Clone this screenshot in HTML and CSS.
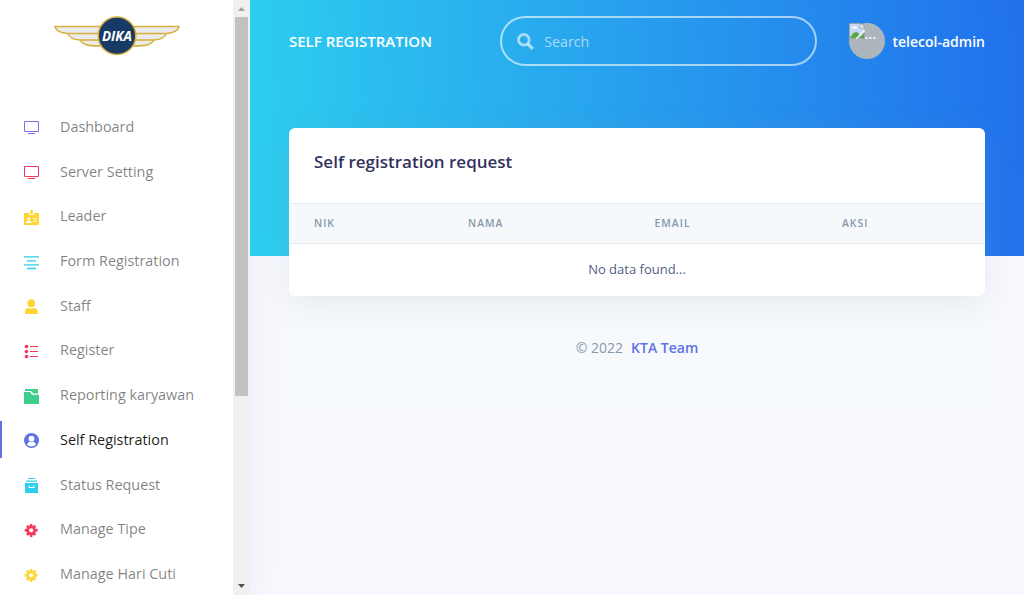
FILE: index.html
```
<!DOCTYPE html>
<html lang="en">
<head>
<meta charset="utf-8">
<title>Self Registration</title>
<link rel="stylesheet" href="styles.css">
</head>
<body>
<div class="app">
  <aside class="sidebar">
    <div class="sidebar-body">
      <div class="brand">
        <svg width="126" height="42" viewBox="0 0 126 42">
          <g fill="#ebebeb" stroke="#d6b13d" stroke-width="1.4" stroke-linejoin="round">
            <path d="M46 11.500H.8C2 15.500 6 18 13.500 18.500C15 22 19 24.500 26 25C28 29 32 31 46 31ZM13.500 18.500H45M26 25H45"/>
            <path d="M80 11.500H125.200C124 15.500 120 18 112.500 18.500C111 22 107 24.500 100 25C98 29 94 31 80 31ZM112.500 18.500H81M100 25H81"/>
          </g>
          <circle cx="63" cy="20.700" r="18.800" fill="#183a66" stroke="#d6b13d" stroke-width="1.500"/>
          <text x="63" y="26" class="brand-text" text-anchor="middle" textLength="30" lengthAdjust="spacingAndGlyphs">DIKA</text>
        </svg>
      </div>
      <nav class="nav">
        <a class="item purple"><svg viewBox="0 0 15 15"><path d="M.5 1.500h14v10H.5z" class="line"/><path d="M4 13.500h7" class="line"/></svg><span>Dashboard</span></a>
        <a class="item pink"><svg viewBox="0 0 15 15"><path d="M.5 1.500h14v10H.5z" class="line"/><path d="M4 13.500h7" class="line"/></svg><span>Server Setting</span></a>
        <a class="item yellow"><svg viewBox="0 0 15 15"><path d="M0 3h5v2h5V3h5v12H0z"/><path d="M6.200 0h2.600v4H6.200z"/><g class="cut"><circle cx="4.800" cy="8.700" r="1.500"/><path d="M2 13c0-3.300 5.600-3.300 5.600 0zM9 8h4v1H9zM9 10.500h4v1H9z"/></g></svg><span>Leader</span></a>
        <a class="item cyan"><svg viewBox="0 0 15 15"><path d="M0 1.800h15M3 5.800h9M0 9.800h15M3 13.500h9" class="line thick"/></svg><span>Form Registration</span></a>
        <a class="item yellow"><svg viewBox="0 0 15 15"><ellipse cx="7.300" cy="4.200" rx="3.700" ry="4"/><path d="M1 15v-2.500C1 10.500 2.500 9 5 9q2.300 1 4.600 0c2.500 0 4.200 1.500 4.200 3.500V15z"/></svg><span>Staff</span></a>
        <a class="item red"><svg viewBox="0 0 15 15"><circle cx="2.500" cy="2.500" r="1.800"/><circle cx="2.500" cy="7.500" r="1.800"/><circle cx="2.500" cy="12.500" r="1.800"/><path d="M6 2.500h8M6 7.500h8M6 12.500h8" class="line"/></svg><span>Register</span></a>
        <a class="item green"><svg viewBox="0 0 15 15"><path d="M1 0h13v4.500H9.500L7 2H1z"/><path d="M0 3h6l2 2.700h7V15H0z"/></svg><span>Reporting karyawan</span></a>
        <a class="item indigo active"><svg viewBox="0 0 15 15"><circle cx="7.500" cy="7.500" r="7.500"/><g class="cut"><circle cx="7.500" cy="5.700" r="2.900"/><path d="M3 11.500c.5-1.600 2-2.500 3-2.700q1.500.8 3 0c1 .2 2.500 1.100 3 2.700-2 2.600-7 2.600-9 0z"/></g></svg><span>Self Registration</span></a>
        <a class="item cyan"><svg viewBox="0 0 15 15"><path d="M4 0h7v1H4zM2 2.500h11v1.200H2zM1 5h13v10H1z"/><path class="cut" d="M4.500 7.500h1v1.500h4V7.500h1V10h-6z"/></svg><span>Status Request</span></a>
        <a class="item red"><svg viewBox="0 0 15 15"><path d="M6.100.3h2.200l.4 2.300 1.900-1.300 1.600 1.500-1.300 2 2.700.5V8l-2.700.5 1.300 2-1.600 1.600-1.900-1.300-.4 2.500H6.100l-.5-2.500-1.900 1.300-1.600-1.600 1.300-2L.7 8V5.300l2.700-.5-1.300-2 1.600-1.500 1.900 1.300z" transform="translate(0 .6)"/><circle class="cut" cx="7.200" cy="7.300" r="2.100"/></svg><span>Manage Tipe</span></a>
        <a class="item yellow"><svg viewBox="0 0 15 15"><path d="M6.100.3h2.200l.4 2.300 1.900-1.300 1.600 1.500-1.300 2 2.700.5V8l-2.700.5 1.300 2-1.600 1.600-1.900-1.300-.4 2.500H6.100l-.5-2.500-1.900 1.300-1.600-1.600 1.300-2L.7 8V5.300l2.700-.5-1.300-2 1.600-1.500 1.900 1.300z" transform="translate(0 .6)"/><circle class="cut" cx="7.200" cy="7.300" r="2.100"/></svg><span>Manage Hari Cuti</span></a>
      </nav>
    </div>
    <div class="scrollbar">
      <svg width="17" height="17" viewBox="0 0 17 17"><path d="M5 11L8.500 7 12 11z" fill="#a3a3a3"/></svg>
      <div class="thumb"></div>
      <svg class="down" width="17" height="17" viewBox="0 0 17 17"><path d="M5 6L8.500 10 12 6z" fill="#505050"/></svg>
    </div>
  </aside>
  <main class="main">
    <header class="hero">
      <div class="topbar">
        <h1 class="title">Self Registration</h1>
        <div class="search">
          <svg width="17" height="17" viewBox="0 0 17 17" fill="none" stroke="currentColor"><circle cx="6.800" cy="6.800" r="5.300" stroke-width="2.800"/><path d="M10.800 10.800l5 5" stroke-width="3.200"/></svg>
          <span>Search</span>
        </div>
        <div class="user">
          <div class="avatar">
            <svg width="16" height="16" viewBox="0 0 16 16"><path d="M.5.500H11l4.500 4.500v3l-7.500 7.500H.5z" fill="#c5d8f7" stroke="#a2a2a2"/><path d="M11 .5V5h4.500" fill="#fff" stroke="#a2a2a2"/><path d="M2.500 5.500c0-2 2-2 2.500-1.500 1-1.500 3-.5 3 1.500z" fill="#fff"/><path d="M1 15c2-4 4-6 6-6 2 0 3 1.500 3.500 3L8 15z" fill="#57a83d"/><path d="M15.500 10v5.500H10z" fill="#57a83d" stroke="#a2a2a2"/><path d="M7 16l9-9" stroke="#fff" stroke-width="1.300"/></svg>
            <span>...</span>
          </div>
          <span class="name">telecol-admin</span>
        </div>
      </div>
    </header>
    <section class="card">
      <h2 class="card-title">Self registration request</h2>
      <table class="table">
        <thead><tr><th class="c1">NIK</th><th class="c2">Nama</th><th class="c3">Email</th><th>Aksi</th></tr></thead>
        <tbody><tr><td colspan="4">No data found...</td></tr></tbody>
      </table>
    </section>
    <footer class="footer"><span>© 2022</span><a>KTA Team</a></footer>
  </main>
</div>
</body>
</html>
```
FILE: styles.css
```
* { box-sizing: border-box; }
body { margin: 0; font-family: "Open Sans", sans-serif; background: #f8f9fe; color: #525f7f; }
.app { display: flex; height: 595px; overflow: hidden; }
.sidebar { display: flex; flex: none; width: 250px; background: #fff; box-shadow: 0 0 32px rgba(136,152,170,.15); }
.sidebar-body { flex: 1; overflow: hidden; }
.brand { display: flex; justify-content: center; padding-top: 15px; height: 104px; }
.brand-text { font: italic 700 13.500px "Open Sans", sans-serif; fill: #fff; }
.nav { display: flex; flex-direction: column; }
.item { display: flex; align-items: center; flex: none; height: 44.730px; padding-left: 24px; font-size: 14.400px; font-weight: 400; }
.item span { color: rgba(0,0,0,.5); }
.item svg { width: 15px; height: 15px; margin: 3px 21px 0 0; fill: currentColor; flex: none; }
.item .line { fill: none; stroke: currentColor; }
.item .thick { stroke-width: 1.300; }
.item .cut { fill: #fff; }
.item.active { background: linear-gradient(#5e72e4, #5e72e4) 0 4px / 2px 37px no-repeat; }
.item.active span { color: rgba(0,0,0,.9); }
.purple { color: #7672e8; }
.pink { color: #f5365c; }
.red { color: #f5365c; }
.yellow { color: #ffd534; }
.cyan { color: #2dceee; }
.green { color: #3ecf8e; }
.indigo { color: #5e72e4; }
.scrollbar { display: flex; flex-direction: column; align-items: center; width: 17px; background: #f0f0f0; }
.thumb { width: 13px; height: 379px; background: #c1c1c1; }
.down { margin-top: auto; }
.main { flex: 1; min-width: 0; }
.hero { height: 256px; padding: 16px 39px 0; background: linear-gradient(87deg, #2dceef, #2170ec); position: relative; }
.topbar { display: flex; align-items: center; height: 50px; color: #fff; }
.title { margin: 0; width: 211px; font-size: 15px; line-height: 22px; font-weight: 600; text-transform: uppercase; white-space: nowrap; }
.search { display: flex; align-items: center; width: 317px; height: 50px; padding-left: 15px; gap: 10.500px; border: 2px solid rgba(255,255,255,.6); border-radius: 25px; color: rgba(255,255,255,.6); font-size: 14.200px; }
.user { display: flex; align-items: center; gap: 8px; margin-left: 32px; font-size: 14px; font-weight: 600; white-space: nowrap; }
.avatar { display: flex; width: 36px; height: 36px; border-radius: 50%; background: #adb5bd; line-height: 22px; flex: none; }
.avatar svg { flex: none; }
.card { margin: -128px 39px 0; height: 168px; padding: 1px 1px 0; border-radius: 6px; background: #fff; box-shadow: 0 8px 32px rgba(136,152,170,.17); position: relative; overflow: hidden; }
.card-title { margin: 0; height: 74px; padding: 20px 24px; font-size: 17px; line-height: 26px; font-weight: 600; color: #32325d; }
.table { width: 100%; table-layout: fixed; border-collapse: collapse; text-align: left; }
.table th { height: 40px; padding: 0 24px 1px; background: #f6f9fc; border-top: 1px solid #e9ecef; border-bottom: 1px solid #e9ecef; color: #8898aa; font-size: 10.400px; letter-spacing: 1px; font-weight: 600; text-transform: uppercase; }
.c1 { width: 154px; }
.c2 { width: 186.500px; }
.c3 { width: 187.500px; }
.table td { height: 51px; padding: 0; text-align: center; font-size: 13px; }
.footer { display: flex; justify-content: center; gap: 8px; margin: 0 39px; padding-top: 41px; height: 110px; font-size: 14px; line-height: 22px; color: #8898aa; background: #f7fafc; }
.footer a { color: #5e72e4; font-weight: 600; }
```
